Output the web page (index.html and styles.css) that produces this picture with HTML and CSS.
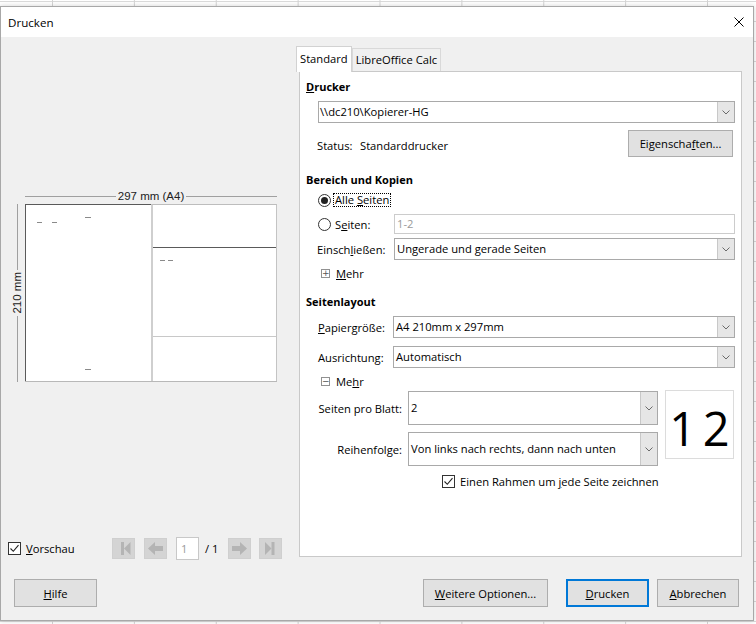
FILE: index.html
```html
<!DOCTYPE html>
<html lang="de">
<head>
<meta charset="utf-8">
<title>Drucken</title>
<link rel="stylesheet" href="styles.css">
</head>
<body>
<div class="dialog">
  <div class="titlebar">
    <span class="title">Drucken</span>
    <svg class="close" width="10" height="10" viewBox="0 0 10 10"><path d="M0.5 0.5 L9.5 9.5 M9.5 0.5 L0.5 9.5" stroke="#000" stroke-width="1" fill="none"/></svg>
  </div>
  <div class="content">
    <div class="left">
      <div class="preview">
        <div class="corner"></div>
        <div class="hdim"><span class="hline"></span><span class="dimtext">297 mm (A4)</span><span class="hline"></span></div>
        <div class="vdim"><span class="vline"></span><span class="dimtext vtext">210 mm</span><span class="vline"></span></div>
        <div class="sheet">
          <div class="page p1">
            <i class="mark" style="left:11px;top:17px;width:5px"></i>
            <i class="mark" style="left:26px;top:17px;width:5px"></i>
            <i class="mark" style="left:59px;top:12px;width:6px"></i>
            <i class="mark" style="left:59px;top:164px;width:6px"></i>
          </div>
          <div class="page p2">
            <div class="p2top"></div>
            <div class="p2mid">
              <i class="mark" style="left:7px;top:12px;width:5px"></i>
              <i class="mark" style="left:15px;top:12px;width:5px"></i>
            </div>
            <div class="p2bot"></div>
          </div>
        </div>
      </div>
      <div class="previewbar">
        <div class="vorschau">
          <span class="cb"><svg width="11" height="11" viewBox="0 0 11 11"><path d="M1.5 5.5 L4.3 8.3 L9.5 2.2" stroke="#222" stroke-width="1.1" fill="none"/></svg></span>
          <span><u>V</u>orschau</span>
        </div>
        <div class="nav">
          <span class="navbtn"><svg width="23" height="21" viewBox="0 0 23 21"><rect x="9" y="4" width="3" height="13" fill="#b4b4b4"/><path d="M18.5 4 L12 10.5 L18.5 17 Z" fill="#b4b4b4"/></svg></span>
          <span class="navbtn"><svg width="23" height="21" viewBox="0 0 23 21"><path d="M4 10.5 L11 4 V8 H19 V13 H11 V17 Z" fill="#b4b4b4"/></svg></span>
          <span class="pagebox">1</span>
          <span class="pagetotal">/ 1</span>
          <span class="navbtn"><svg width="23" height="21" viewBox="0 0 23 21"><path d="M19 10.5 L12 4 V8 H4 V13 H12 V17 Z" fill="#b4b4b4"/></svg></span>
          <span class="navbtn"><svg width="23" height="21" viewBox="0 0 23 21"><path d="M6 4 L12.5 10.5 L6 17 Z" fill="#b4b4b4"/><rect x="12.5" y="4" width="3" height="13" fill="#b4b4b4"/></svg></span>
        </div>
      </div>
    </div>
    <div class="right">
      <div class="tabs">
        <div class="tab active">Standard</div>
        <div class="tab">LibreOffice Calc</div>
      </div>
      <div class="panel">
        <div class="h"><u>D</u>rucker</div>
        <div class="ind">
          <div class="combo c-printer"><span class="val">\\dc210\Kopierer-HG</span><span class="dd"><svg width="8" height="5" viewBox="0 0 8 5"><path d="M0.5 0.5 L4 4 L7.5 0.5" stroke="#6a6a6a" fill="none"/></svg></span></div>
          <div class="status">
            <span class="slab">Status:</span>
            <span class="sval">Standarddrucker</span>
            <button class="btn eig">Eigenscha<u>f</u>ten...</button>
          </div>
        </div>
        <div class="h h-bereich">Bereich und Kopien</div>
        <div class="ind">
          <div class="radiorow r-alle">
            <span class="radio on"></span>
            <span class="focus">Alle <u>S</u>eiten</span>
          </div>
          <div class="row r-seiten">
            <span class="lab"><span class="radio"></span><span class="rtext">S<u>e</u>iten:</span></span>
            <span class="input">1-2</span>
          </div>
          <div class="row r-einschl">
            <span class="lab">Einsch<u>l</u>ießen:</span>
            <div class="combo"><span class="val">Ungerade und gerade Seiten</span><span class="dd"><svg width="8" height="5" viewBox="0 0 8 5"><path d="M0.5 0.5 L4 4 L7.5 0.5" stroke="#6a6a6a" fill="none"/></svg></span></div>
          </div>
          <div class="exp e1"><span class="expbox">+</span><span><u>M</u>ehr</span></div>
        </div>
        <div class="h h-layout">Seitenlayout</div>
        <div class="ind">
          <div class="row r-papier">
            <span class="lab lab75"><u>P</u>apiergröße:</span>
            <div class="combo"><span class="val">A4 210mm x 297mm</span><span class="dd"><svg width="8" height="5" viewBox="0 0 8 5"><path d="M0.5 0.5 L4 4 L7.5 0.5" stroke="#6a6a6a" fill="none"/></svg></span></div>
          </div>
          <div class="row r-ausr">
            <span class="lab lab75">Ausrichtun<u>g</u>:</span>
            <div class="combo"><span class="val">Automatisch</span><span class="dd"><svg width="8" height="5" viewBox="0 0 8 5"><path d="M0.5 0.5 L4 4 L7.5 0.5" stroke="#6a6a6a" fill="none"/></svg></span></div>
          </div>
          <div class="exp e2"><span class="expbox">−</span><span>Me<u>h</u>r</span></div>
          <div class="multi">
            <div class="mgrid">
              <span class="mlab">Seiten pro Blatt:</span>
              <div class="combo tall"><span class="val">2</span><span class="dd"><svg width="8" height="5" viewBox="0 0 8 5"><path d="M0.5 0.5 L4 4 L7.5 0.5" stroke="#6a6a6a" fill="none"/></svg></span></div>
              <span class="mlab">Reihenfolge:</span>
              <div class="combo tall"><span class="val">Von links nach rechts, dann nach unten</span><span class="dd"><svg width="8" height="5" viewBox="0 0 8 5"><path d="M0.5 0.5 L4 4 L7.5 0.5" stroke="#6a6a6a" fill="none"/></svg></span></div>
            </div>
            <div class="nup"><span>1</span><span>2</span></div>
          </div>
          <div class="checkrow">
            <span class="cb"><svg width="11" height="11" viewBox="0 0 11 11"><path d="M1.5 5.5 L4.3 8.3 L9.5 2.2" stroke="#222" stroke-width="1.1" fill="none"/></svg></span>
            <span>Einen Rahmen um <u>j</u>ede Seite zeichnen</span>
          </div>
        </div>
      </div>
    </div>
  </div>
  <div class="footer">
    <button class="btn b-hilfe"><u>H</u>ilfe</button>
    <button class="btn b-weitere"><u>W</u>eitere Optionen...</button>
    <button class="btn b-drucken"><u>D</u>rucken</button>
    <button class="btn b-abbr"><u>A</u>bbrechen</button>
  </div>
</div>
</body>
</html>
```

FILE: styles.css
```css
* { box-sizing: border-box; }
html, body { margin: 0; padding: 0; }
body {
  width: 756px;
  height: 624px;
  overflow: hidden;
  padding-top: 6px;
  background-color: #ffffff;
  background-image:
    linear-gradient(to right, #d4d4d4 1px, transparent 1px),
    linear-gradient(to bottom, #dadada 1px, transparent 1px);
  background-size: 81.875px 100%, 100% 20px;
  background-position: 52px 0, 0 1px;
  font-family: "Open Sans", "Noto Sans", sans-serif;
  font-size: 11.2px;
  color: #000;
}
u { text-decoration: underline; text-underline-offset: 1px; }

.dialog {
  width: 754px;
  height: 615px;
  border: 1px solid #a8a8a8;
  background: #f0f0f0;
  display: flex;
  flex-direction: column;
  box-shadow: 0 0 5px rgba(0,0,0,0.18);
}

.titlebar {
  height: 30px;
  background: #ffffff;
  display: flex;
  align-items: center;
  justify-content: space-between;
  padding: 0 9px 0 7px;
  flex: none;
}
.title { font-size: 11.6px; }
.close { display: block; }

.content {
  height: 523px;
  flex: none;
  display: flex;
  padding-top: 9px;
}

/* left preview pane */
.left {
  width: 297px;
  flex: none;
  display: flex;
  flex-direction: column;
}
.preview {
  margin-top: 143px;
  display: grid;
  grid-template-columns: 24px 252px;
  grid-template-rows: 15px 178px;
}
.hdim {
  display: flex;
  align-items: center;
  gap: 2px;
}
.hline { flex: 1; height: 1px; background: #a0a0a0; }
.dimtext {
  font-family: "Liberation Sans", Arial, sans-serif;
  font-size: 11.5px;
  line-height: 15px;
  color: #222;
}
.vdim {
  display: flex;
  flex-direction: column;
  align-items: center;
  width: 13px;
  margin-left: 10px;
  gap: 2px;
}
.vline { flex: 1; width: 1px; background: #a0a0a0; }
.vtext {
  writing-mode: vertical-rl;
  transform: rotate(180deg);
  line-height: 13px;
}
.sheet {
  display: flex;
  background: #fff;
  border-bottom: 1px solid #b8b8b8;
}
.page { position: relative; }
.p1 {
  width: 126px;
  border-left: 1px solid #5a5a5a;
  border-top: 1px solid #5a5a5a;
}
.p2 {
  flex: 1;
  display: flex;
  flex-direction: column;
  border-left: 2px solid #cfcfcf;
  border-top: 1px solid #bdbdbd;
  border-right: 1px solid #c4c4c4;
}
.p2top { height: 43px; border-bottom: 1px solid #5a5a5a; }
.p2mid { height: 89px; border-bottom: 1px solid #c8c8c8; position: relative; }
.p2bot { flex: 1; }
.mark {
  position: absolute;
  height: 1px;
  background: #8a8a8a;
}

.previewbar {
  margin-top: auto;
  height: 23px;
  display: flex;
  align-items: center;
  padding-left: 7px;
}
.vorschau {
  width: 104px;
  display: flex;
  align-items: center;
  gap: 5px;
}
.cb {
  width: 13px;
  height: 13px;
  border: 1px solid #333;
  background: #fff;
  display: flex;
  align-items: center;
  justify-content: center;
  flex: none;
}
.cb svg { display: block; }
.nav { display: flex; align-items: center; }
.navbtn {
  width: 23px;
  height: 21px;
  background: #d4d4d4;
  border: 1px solid #cfcfcf;
  display: block;
}
.navbtn svg { display: block; margin: -1px; }
.nav .navbtn:nth-child(2) { margin-left: 9px; }
.pagebox {
  margin-left: 9px;
  width: 23px;
  height: 23px;
  background: #fff;
  border: 1px solid #c8c8c8;
  color: #9a9a9a;
  padding-left: 4px;
  line-height: 21px;
}
.pagetotal { margin-left: 6px; width: 23px; }
.pagetotal + .navbtn { margin-left: 0; }
.nav .navbtn:last-child { margin-left: 8px; }

/* right pane */
.right {
  width: 444px;
  flex: none;
  display: flex;
  flex-direction: column;
}
.tabs {
  height: 25px;
  display: flex;
  align-items: flex-end;
  position: relative;
  z-index: 1;
}
.tab {
  height: 23px;
  padding: 0 3px;
  border: 1px solid #d9d9d9;
  border-bottom: none;
  background: #f0f0f0;
  line-height: 21px;
  white-space: nowrap;
}
.tab.active {
  height: 26px;
  margin-left: -2px;
  margin-bottom: -1px;
  background: #ffffff;
  padding: 0 3px;
  line-height: 23px;
  border-color: #d2d2d2;
}
.panel {
  margin-left: 1px;
  height: 486px;
  background: #ffffff;
  border: 1px solid #c9c9c9;
  padding: 7px 6px 0 6px;
}
.h {
  font-weight: bold;
  font-size: 11px;
  height: 16px;
  line-height: 16px;
}
.h-bereich { margin-top: 15px; }
.h-layout { margin-top: 13px; }
.ind { margin-left: 12px; }

.combo {
  height: 22px;
  border: 1px solid #a9a9a9;
  background: #fff;
  display: flex;
  flex: 1;
}
.combo .val {
  flex: 1;
  padding-left: 2px;
  line-height: 20px;
  white-space: nowrap;
}
.combo .dd {
  width: 17px;
  background: #e6e6e6;
  border-left: 1px solid #c8c8c8;
  display: flex;
  align-items: center;
  justify-content: center;
}
.combo .dd svg { display: block; }
.c-printer { margin-top: 6px; }
.c-printer .val { padding-left: 1px; }

.status {
  margin-top: 7px;
  height: 27px;
  display: flex;
  align-items: center;
  padding-top: 3px;
}
.slab { width: 43px; margin-left: -1px; }
.sval { flex: 1; }

.btn {
  font-family: inherit;
  font-size: 11.2px;
  color: #000;
  background: #e1e1e1;
  border: 1px solid #adadad;
  height: 28px;
  padding: 0;
  margin: 0;
}
.eig { width: 105px; height: 27px; margin-right: 2px; margin-top: -3px; }

.radio {
  width: 13px;
  height: 13px;
  border: 1px solid #333;
  border-radius: 50%;
  background: #fff;
  display: inline-flex;
  align-items: center;
  justify-content: center;
  flex: none;
}
.radio.on::after {
  content: "";
  width: 7px;
  height: 7px;
  border-radius: 50%;
  background: #222;
}
.radiorow {
  margin-top: 4px;
  height: 16px;
  display: flex;
  align-items: center;
}
.focus {
  margin-left: 2px;
  border: 1px dotted #000;
  padding: 0 1px;
  line-height: 12px;
}

.row {
  display: flex;
  align-items: center;
}
.lab {
  width: 76px;
  flex: none;
  display: flex;
  align-items: center;
  white-space: nowrap;
}
.lab75 { width: 75px; }
.r-seiten { margin-top: 6px; height: 20px; }
.r-seiten .rtext { margin-left: 4px; }
.input {
  flex: 1;
  height: 20px;
  border: 1px solid #cccccc;
  background: #fff;
  color: #9a9a9a;
  line-height: 18px;
  padding-left: 2px;
}
.r-einschl { margin-top: 4px; height: 22px; }
.r-einschl .lab { margin-left: -1px; width: 77px; }
.r-papier { margin-top: 6px; height: 22px; }
.r-ausr { margin-top: 8px; height: 22px; }

.exp {
  height: 16px;
  display: flex;
  align-items: center;
  padding-left: 3px;
  gap: 6px;
}
.e1 { margin-top: 5px; }
.e2 { margin-top: 5px; }
.expbox {
  width: 9px;
  height: 9px;
  border: 1px solid #919191;
  font-family: "DejaVu Sans", sans-serif;
  font-size: 9px;
  line-height: 7px;
  text-align: center;
  color: #555;
  overflow: hidden;
}

.multi {
  margin-top: 1px;
  height: 76px;
  display: flex;
}
.mgrid {
  display: grid;
  grid-template-columns: 90px 250px;
  grid-template-rows: 34px 34px;
  row-gap: 7px;
  margin-top: 1px;
  align-items: center;
}
.mlab { text-align: right; padding-right: 6px; white-space: nowrap; }
.combo.tall { height: 34px; }
.combo.tall .val { line-height: 32px; }
.combo.tall .dd { width: 17px; }
.nup {
  margin-left: 7px;
  width: 69px;
  height: 69px;
  border: 1px solid #dcdcdc;
  background: #fff;
  display: flex;
  font-size: 47px;
  line-height: 66px;
  padding-top: 4px;
}
.nup span { flex: 1; text-align: center; }

.checkrow {
  margin-top: 7px;
  height: 16px;
  display: flex;
  align-items: center;
  gap: 5px;
  margin-left: 124px;
}

.footer {
  flex: 1;
  display: flex;
  align-items: flex-start;
  padding: 19px 14px 0 13px;
}
.b-hilfe { width: 83px; }
.b-weitere { width: 125px; margin-left: auto; }
.b-drucken { width: 83px; margin-left: 18px; border: 2px solid #0078d7; }
.b-abbr { width: 82px; margin-left: 8px; }
```
